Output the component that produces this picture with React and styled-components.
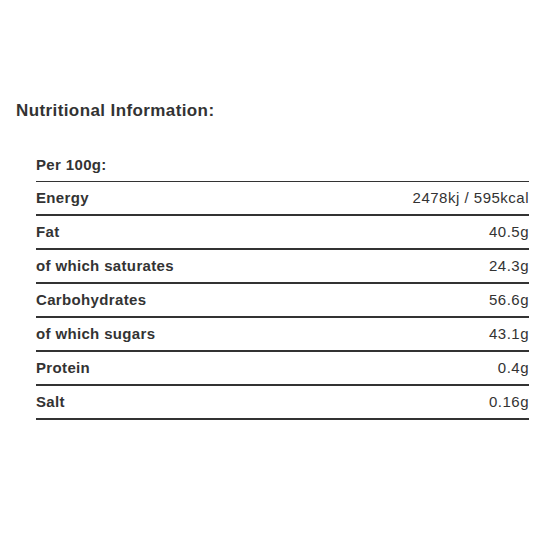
import React from "react";
import styled, { createGlobalStyle } from "styled-components";

const Global = createGlobalStyle`
  html, body { margin: 0; padding: 0; background: #fff; }
  body { font-family: "Liberation Sans", Arial, sans-serif; color: #333; }
`;

const Page = styled.div`
  padding: 101px 31px 0 16px;
  box-sizing: border-box;
  width: 560px;
`;

const Heading = styled.h3`
  margin: 0 0 28px 0;
  font-size: 17px;
  line-height: 20px;
  font-weight: bold;
  letter-spacing: 0.4px;
  color: #333;
`;

const Table = styled.table`
  margin-left: 20px;
  width: 493px;
  border-collapse: collapse;
  font-size: 15px;
`;

const Row = styled.tr`
  border-bottom: ${(p) => (p.$head ? "1px" : "2px")} solid #333;
`;

const Label = styled.th`
  text-align: left;
  font-weight: bold;
  height: 32px;
  line-height: 32px;
  padding: 0;
  letter-spacing: 0.35px;
  color: #333;
`;

const Value = styled.td`
  text-align: right;
  font-weight: normal;
  padding: 0;
  line-height: 32px;
  letter-spacing: 0.5px;
  color: #333;
`;

const rows = [
  ["Energy", "2478kj / 595kcal"],
  ["Fat", "40.5g"],
  ["of which saturates", "24.3g"],
  ["Carbohydrates", "56.6g"],
  ["of which sugars", "43.1g"],
  ["Protein", "0.4g"],
  ["Salt", "0.16g"],
];

export default function App() {
  return (
    <>
      <Global />
      <Page>
        <Heading>Nutritional Information:</Heading>
        <Table>
          <tbody>
            <Row $head>
              <Label colSpan={2}>Per 100g:</Label>
            </Row>
            {rows.map(([k, v]) => (
              <Row key={k}>
                <Label>{k}</Label>
                <Value>{v}</Value>
              </Row>
            ))}
          </tbody>
        </Table>
      </Page>
    </>
  );
}
